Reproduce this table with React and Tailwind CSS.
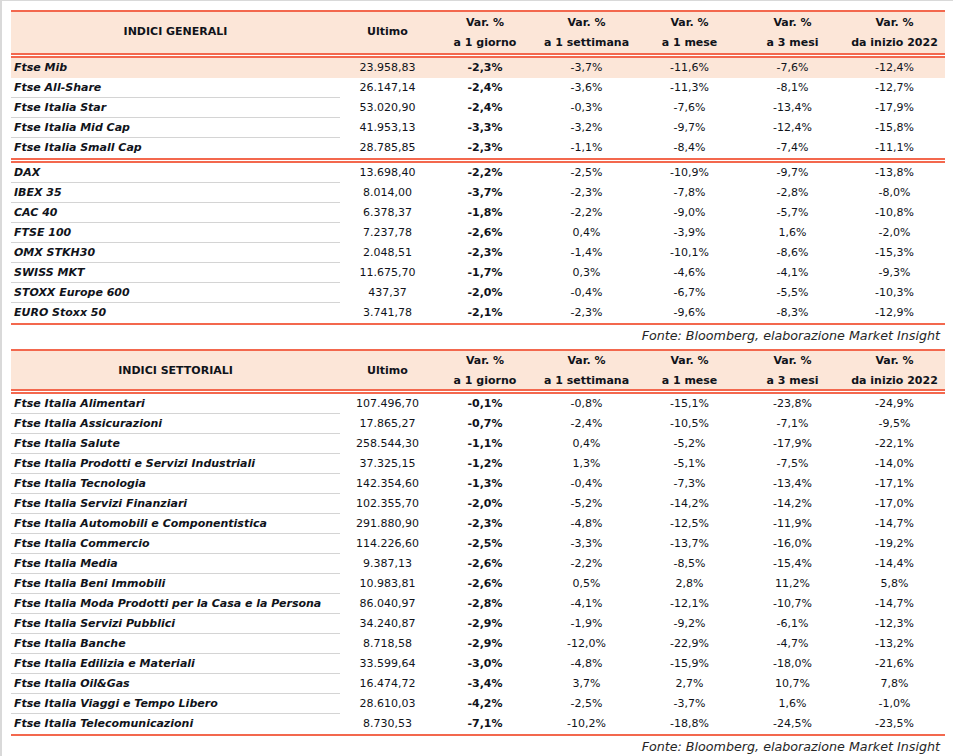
const cols = "grid grid-cols-[329px_95px_100px_103px_103px_103px_101px]";

const generali = [
  [
    ["Ftse Mib", "23.958,83", "-2,3%", "-3,7%", "-11,6%", "-7,6%", "-12,4%"],
    ["Ftse All-Share", "26.147,14", "-2,4%", "-3,6%", "-11,3%", "-8,1%", "-12,7%"],
    ["Ftse Italia Star", "53.020,90", "-2,4%", "-0,3%", "-7,6%", "-13,4%", "-17,9%"],
    ["Ftse Italia Mid Cap", "41.953,13", "-3,3%", "-3,2%", "-9,7%", "-12,4%", "-15,8%"],
    ["Ftse Italia Small Cap", "28.785,85", "-2,3%", "-1,1%", "-8,4%", "-7,4%", "-11,1%"],
  ],
  [
    ["DAX", "13.698,40", "-2,2%", "-2,5%", "-10,9%", "-9,7%", "-13,8%"],
    ["IBEX 35", "8.014,00", "-3,7%", "-2,3%", "-7,8%", "-2,8%", "-8,0%"],
    ["CAC 40", "6.378,37", "-1,8%", "-2,2%", "-9,0%", "-5,7%", "-10,8%"],
    ["FTSE 100", "7.237,78", "-2,6%", "0,4%", "-3,9%", "1,6%", "-2,0%"],
    ["OMX STKH30", "2.048,51", "-2,3%", "-1,4%", "-10,1%", "-8,6%", "-15,3%"],
    ["SWISS MKT", "11.675,70", "-1,7%", "0,3%", "-4,6%", "-4,1%", "-9,3%"],
    ["STOXX Europe 600", "437,37", "-2,0%", "-0,4%", "-6,7%", "-5,5%", "-10,3%"],
    ["EURO Stoxx 50", "3.741,78", "-2,1%", "-2,3%", "-9,6%", "-8,3%", "-12,9%"],
  ],
];

const settoriali = [
  [
    ["Ftse Italia Alimentari", "107.496,70", "-0,1%", "-0,8%", "-15,1%", "-23,8%", "-24,9%"],
    ["Ftse Italia Assicurazioni", "17.865,27", "-0,7%", "-2,4%", "-10,5%", "-7,1%", "-9,5%"],
    ["Ftse Italia Salute", "258.544,30", "-1,1%", "0,4%", "-5,2%", "-17,9%", "-22,1%"],
    ["Ftse Italia Prodotti e Servizi Industriali", "37.325,15", "-1,2%", "1,3%", "-5,1%", "-7,5%", "-14,0%"],
    ["Ftse Italia Tecnologia", "142.354,60", "-1,3%", "-0,4%", "-7,3%", "-13,4%", "-17,1%"],
    ["Ftse Italia Servizi Finanziari", "102.355,70", "-2,0%", "-5,2%", "-14,2%", "-14,2%", "-17,0%"],
    ["Ftse Italia Automobili e Componentistica", "291.880,90", "-2,3%", "-4,8%", "-12,5%", "-11,9%", "-14,7%"],
    ["Ftse Italia Commercio", "114.226,60", "-2,5%", "-3,3%", "-13,7%", "-16,0%", "-19,2%"],
    ["Ftse Italia Media", "9.387,13", "-2,6%", "-2,2%", "-8,5%", "-15,4%", "-14,4%"],
    ["Ftse Italia Beni Immobili", "10.983,81", "-2,6%", "0,5%", "2,8%", "11,2%", "5,8%"],
    ["Ftse Italia Moda Prodotti per la Casa e la Persona", "86.040,97", "-2,8%", "-4,1%", "-12,1%", "-10,7%", "-14,7%"],
    ["Ftse Italia Servizi Pubblici", "34.240,87", "-2,9%", "-1,9%", "-9,2%", "-6,1%", "-12,3%"],
    ["Ftse Italia Banche", "8.718,58", "-2,9%", "-12,0%", "-22,9%", "-4,7%", "-13,2%"],
    ["Ftse Italia Edilizia e Materiali", "33.599,64", "-3,0%", "-4,8%", "-15,9%", "-18,0%", "-21,6%"],
    ["Ftse Italia Oil&Gas", "16.474,72", "-3,4%", "3,7%", "2,7%", "10,7%", "7,8%"],
    ["Ftse Italia Viaggi e Tempo Libero", "28.610,03", "-4,2%", "-2,5%", "-3,7%", "1,6%", "-1,0%"],
    ["Ftse Italia Telecomunicazioni", "8.730,53", "-7,1%", "-10,2%", "-18,8%", "-24,5%", "-23,5%"],
  ],
];

const varHeads = [
  ["Var. %", "a 1 giorno"],
  ["Var. %", "a 1 settimana"],
  ["Var. %", "a 1 mese"],
  ["Var. %", "a 3 mesi"],
  ["Var. %", "da inizio 2022"],
];

const DoubleLine = () => (
  <div className="flex flex-col">
    <div className="h-[2px] bg-[#f3684e]" />
    <div className="h-px bg-white" />
    <div className="h-[2px] bg-[#f3684e]" />
  </div>
);

const Row = ({ r, highlight, last }) => (
  <div className={`${cols} h-5 items-center ${highlight ? "bg-[#fce6d8]" : ""}`}>
    <div
      className={`h-5 flex items-center pl-[3px] pt-px font-bold italic ${
        highlight || last ? "" : "border-b border-[#d4d4d4]"
      }`}
    >
      {r[0]}
    </div>
    <div className="text-center">{r[1]}</div>
    <div className="text-center font-bold">{r[2]}</div>
    <div className="text-center">{r[3]}</div>
    <div className="text-center">{r[4]}</div>
    <div className="text-center">{r[5]}</div>
    <div className="text-center">{r[6]}</div>
  </div>
);

const Table = ({ title, groups, highlightFirst, headH }) => (
  <div className="flex flex-col">
    <div className="h-[2px] bg-[#f3684e]" />
    <div className={`${cols} ${headH} bg-[#fce6d8] items-center font-bold`}>
      <div className="text-center">{title}</div>
      <div className="text-center">Ultimo</div>
      {varHeads.map((h) => (
        <div key={h[1]} className="flex flex-col items-center leading-5">
          <span>{h[0]}</span>
          <span>{h[1]}</span>
        </div>
      ))}
    </div>
    {groups.map((g, gi) => (
      <div key={gi} className="flex flex-col">
        <DoubleLine />
        {g.map((r, i) => (
          <Row key={r[0]} r={r} highlight={highlightFirst && gi === 0 && i === 0} last={i === g.length - 1} />
        ))}
      </div>
    ))}
    <div className="h-[2px] bg-[#f3684e]" />
    <div className="text-right pr-[5px] italic text-[#262626] text-[12.7px] leading-5 pt-px">
      Fonte: Bloomberg, elaborazione Market Insight
    </div>
  </div>
);

export default function App() {
  return (
    <div className="w-[953px] h-[756px] bg-white border-l-2 border-t border-[#d9d9d9] pl-[9px] pt-[9px] text-[#10131a] text-[11px] font-['DejaVu_Sans',sans-serif] overflow-hidden">
      <div className="w-[934px] flex flex-col">
        <Table title="INDICI GENERALI" groups={generali} highlightFirst headH="h-[41px]" />
        <div className="h-[3px]" />
        <Table title="INDICI SETTORIALI" groups={settoriali} headH="h-[38px]" />
      </div>
    </div>
  );
}
